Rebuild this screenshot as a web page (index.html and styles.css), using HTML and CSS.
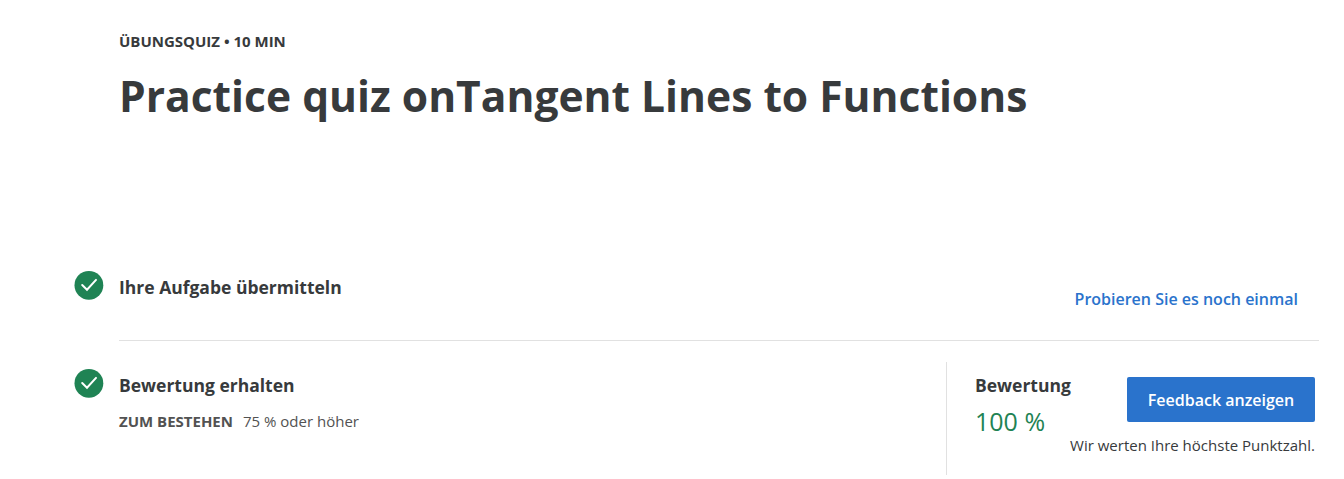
FILE: index.html
```html
<!DOCTYPE html>
<html lang="de">
<head>
<meta charset="utf-8">
<title>Practice quiz</title>
<link rel="stylesheet" href="styles.css">
</head>
<body>
<main class="page">
  <header class="header">
    <p class="eyebrow">ÜBUNGSQUIZ • 10 MIN</p>
    <h1 class="title">Practice quiz onTangent Lines to Functions</h1>
  </header>
  <section class="step">
    <svg class="check" viewBox="0 0 30 29"><circle cx="14.9" cy="14.3" r="14.4" fill="#1f8354"/><path d="M8.2 14l4.8 4.7 9-9.8" fill="none" stroke="#fff" stroke-width="2" stroke-linecap="round"/></svg>
    <div class="row row-submit">
      <h2 class="label">Ihre Aufgabe übermitteln</h2>
      <a class="retry">Probieren Sie es noch einmal</a>
    </div>
  </section>
  <section class="step step-grade">
    <svg class="check" viewBox="0 0 30 29"><circle cx="14.9" cy="14.3" r="14.4" fill="#1f8354"/><path d="M8.2 14l4.8 4.7 9-9.8" fill="none" stroke="#fff" stroke-width="2" stroke-linecap="round"/></svg>
    <div class="row">
      <div class="info">
        <h2 class="label">Bewertung erhalten</h2>
        <p class="pass"><strong>ZUM BESTEHEN</strong><span>75 % oder höher</span></p>
      </div>
      <div class="grade">
        <div class="score">
          <h2 class="label">Bewertung</h2>
          <p class="percent">100 %</p>
        </div>
        <div class="feedback">
          <button class="button">Feedback anzeigen</button>
          <p class="note">Wir werten Ihre höchste Punktzahl.</p>
        </div>
      </div>
    </div>
  </section>
</main>
</body>
</html>
```
FILE: styles.css
```css
* { box-sizing: border-box; }
body { margin: 0; background: #fff; color: #373a3c; font-family: "Open Sans", sans-serif; }
h1, h2, p { margin: 0; }
.page { width: 1319px; height: 479px; padding-left: 74px; overflow: hidden; }
.header { height: 271px; padding: 31px 0 0 45px; }
.eyebrow { font-size: 15px; line-height: 21px; font-weight: 700; }
.title { margin-top: 14px; font-size: 42.55px; line-height: 60px; font-weight: 700; white-space: nowrap; }
.step { display: flex; gap: 15px; }
.check { flex: none; width: 30px; height: 29px; overflow: visible; }
.row { display: flex; justify-content: space-between; flex: 1; }
.row-submit { height: 70px; border-bottom: 1px solid #e1e1e1; }
.label { font-size: 17.5px; line-height: 24px; font-weight: 700; padding-top: 4px; white-space: nowrap; }
.retry { margin: 16px 21px 0 0; font-size: 16px; line-height: 24px; font-weight: 600; color: #2a73cc; white-space: nowrap; }
.step-grade { padding-top: 21px; }
.step-grade .check { margin-top: 7px; }
.info { padding-top: 7px; }
.pass { display: flex; gap: 10px; margin-top: 14px; font-size: 15px; line-height: 21px; color: #525252; }
.grade { display: flex; justify-content: space-between; width: 373px; height: 113px; border-left: 1px solid #e1e1e1; padding: 7px 4px 0 28px; }
.score { width: 95px; flex: none; }
.percent { margin-top: 7px; font-size: 25px; line-height: 34px; color: #1f8354; }
.feedback { display: flex; flex-direction: column; align-items: flex-end; width: 0; padding-top: 8px; }
.button { width: 188px; height: 45px; flex: none; border: 0; border-radius: 2px; padding: 0; background: #2a73cc; color: #fff; font: 600 16px/24px "Open Sans", sans-serif; }
.note { margin-top: 12px; font-size: 15px; line-height: 22px; white-space: nowrap; }
```
